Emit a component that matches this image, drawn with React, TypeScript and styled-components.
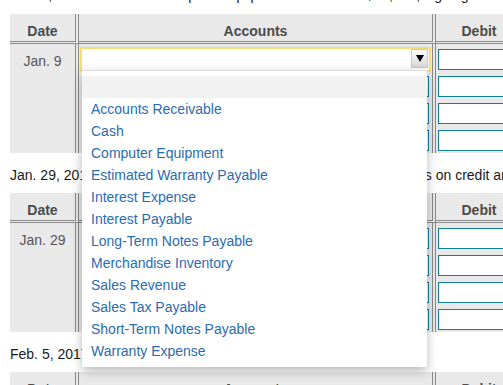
import React, { FC } from "react";
import styled, { createGlobalStyle } from "styled-components";

const GlobalStyle = createGlobalStyle`
  html, body {
    margin: 0;
    overflow: hidden;
    background: #fff;
  }
  body {
    font-family: "Liberation Sans", Arial, sans-serif;
    font-size: 14px;
  }
`;

const ACCOUNTS = [
  "",
  "Accounts Receivable",
  "Cash",
  "Computer Equipment",
  "Estimated Warranty Payable",
  "Interest Expense",
  "Interest Payable",
  "Long-Term Notes Payable",
  "Merchandise Inventory",
  "Sales Revenue",
  "Sales Tax Payable",
  "Short-Term Notes Payable",
  "Warranty Expense",
];

const LINE = "#8a8a8a";
const TEAL = "#11809c";

const Page = styled.div`
  margin-top: -26px;
  padding-left: 10px;
  width: 620px;
`;

const Prompt = styled.p<{ $first?: boolean }>`
  margin: 0;
  padding: ${(p) => (p.$first ? "13px 0 11px" : "14px 0 10px")};
  line-height: 16px;
  color: #1a1a1a;
  white-space: nowrap;
`;

const Table = styled.div`
  display: grid;
  grid-template-columns: 69px 357px 90px 90px;
  background: #e9e9e9;
`;

const HeaderCell = styled.div<{ $last?: boolean }>`
  box-sizing: border-box;
  height: 30px;
  padding-top: 9px;
  line-height: 16px;
  border-bottom: 3px double ${LINE};
  border-right: ${(p) => (p.$last ? "none" : `4px double ${LINE}`)};
  text-align: center;
  font-weight: bold;
  color: #4b4b4b;
`;

const BodyCell = styled.div<{ $last?: boolean }>`
  box-sizing: border-box;
  padding: 5px 0 2px;
  border-right: ${(p) => (p.$last ? "none" : `4px double ${LINE}`)};
  display: flex;
  flex-direction: column;
  gap: 6px;
`;

const DateText = styled.div`
  padding-top: 4px;
  text-align: center;
  line-height: 16px;
  color: #555;
`;

const Select = styled.div<{ $focused?: boolean }>`
  position: relative;
  box-sizing: border-box;
  margin-left: 3px;
  width: 347px;
  height: 21px;
  background: #fff;
  border: 1px solid ${(p) => (p.$focused ? "#fff" : TEAL)};
  outline: ${(p) => (p.$focused ? "2px solid #f7dc70" : "none")};
  display: flex;
  justify-content: flex-end;
  align-items: flex-start;
`;

const ArrowButton = styled.div`
  box-sizing: border-box;
  width: 17px;
  height: 19px;
  margin-top: -1px;
  border: 1px solid #c9c9c9;
  background: linear-gradient(#fbfbfb, #d9d9d9);
  display: flex;
  align-items: center;
  justify-content: center;
`;

const Menu = styled.ul`
  position: absolute;
  top: 20px;
  left: -1px;
  z-index: 10;
  box-sizing: border-box;
  width: 345px;
  margin: 0;
  padding: 5px 0;
  list-style: none;
  background: #fff;
  border-top: 1px solid #ddd;
  box-shadow: 0 4px 10px rgba(0, 0, 0, 0.28);
`;

const MenuItem = styled.li<{ $active?: boolean }>`
  height: 22px;
  line-height: 22px;
  padding-left: 9px;
  color: #2b6bb0;
  background: ${(p) => (p.$active ? "#f2f2f2" : "transparent")};
  white-space: nowrap;
`;

const Amount = styled.div`
  box-sizing: border-box;
  margin-left: 2px;
  width: 100px;
  height: 21px;
  background: #fff;
  border: 1px solid ${TEAL};
`;

const ROWS = [0, 1, 2, 3];

const Journal: FC<{ date: string; open?: boolean }> = ({ date, open }) => (
  <Table>
    <HeaderCell>Date</HeaderCell>
    <HeaderCell>Accounts</HeaderCell>
    <HeaderCell>Debit</HeaderCell>
    <HeaderCell $last>Credit</HeaderCell>
    <BodyCell>
      <DateText>{date}</DateText>
    </BodyCell>
    <BodyCell>
      {ROWS.map((i) =>
        open && i === 0 ? (
          <Select key={i} $focused>
            <ArrowButton>
              <svg width="8" height="7" viewBox="0 0 8 7">
                <polygon points="0,0 8,0 4,7" fill="#000" />
              </svg>
            </ArrowButton>
            <Menu>
              {ACCOUNTS.map((name, j) => (
                <MenuItem key={j} $active={j === 0}>
                  {name}
                </MenuItem>
              ))}
            </Menu>
          </Select>
        ) : (
          <Select key={i} />
        )
      )}
    </BodyCell>
    <BodyCell>
      {ROWS.map((i) => (
        <Amount key={i} />
      ))}
    </BodyCell>
    <BodyCell $last>
      {ROWS.map((i) => (
        <Amount key={i} />
      ))}
    </BodyCell>
  </Table>
);

const App: FC = () => (
  <>
    <GlobalStyle />
    <Page>
      <Prompt $first>
        Jan. 9, 2017 Purchased computer equipment at a cost of $14,000, signing a 6-month, 6% note payable for that amount.
      </Prompt>
      <Journal date="Jan. 9" open />
      <Prompt>
        Jan. 29, 2017 Sold $20,000 of its merchandise to various customers on credit and collected sales tax.
      </Prompt>
      <Journal date="Jan. 29" />
      <Prompt>Feb. 5, 2017 Paid the sales tax collected in January.</Prompt>
      <Journal date="Feb. 5" />
    </Page>
  </>
);

export default App;
